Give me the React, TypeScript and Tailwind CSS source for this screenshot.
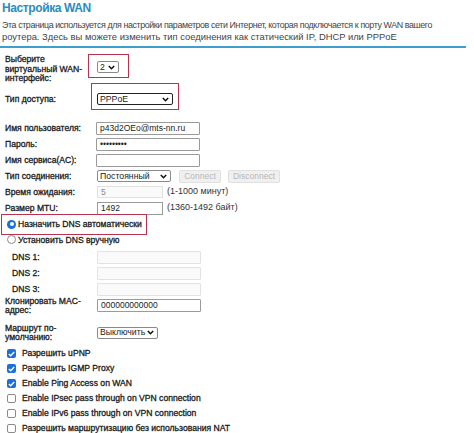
import type { ReactNode } from 'react'

const Chevron = () => (
  <svg width="7" height="5" viewBox="0 0 7 5" className="shrink-0">
    <path d="M0.8 0.9 L3.5 3.7 L6.2 0.9" fill="none" stroke="#111" strokeWidth="1.5" />
  </svg>
)

const Select = ({ value, w, dark }: { value: string; w: string; dark?: boolean }) => (
  <div
    className={`flex h-[12px] items-center justify-between bg-white pl-[2px] pr-[3px] text-[8.7px] text-[#222] [-webkit-text-stroke:0px] ${w} ${
      dark ? 'rounded-[2px] border-[1.5px] border-[#222]' : 'rounded-[2px] border border-[#8a8a8a]'
    }`}
  >
    <span className="leading-none">{value}</span>
    <Chevron />
  </div>
)

const Input = ({ value, disabled }: { value?: string; disabled?: boolean }) => (
  <div
    className={`flex h-[13px] w-[104px] items-center rounded-[1px] px-[3px] text-[8.5px] leading-none [-webkit-text-stroke:0px] ${
      disabled ? 'border border-[#e2e2e2] bg-[#fafafa] text-[#8a8a8a]' : 'border border-[#9a9a9a] bg-white text-[#222]'
    }`}
  >
    {value}
  </div>
)

const Row = ({ label, children, h = 'h-[16px]' }: { label: ReactNode; children?: ReactNode; h?: string }) => (
  <div className={`flex items-center ${h}`}>
    <div className="w-[96px] shrink-0 pl-[5px] leading-[9px]">{label}</div>
    <div className="flex items-center gap-[4px]">{children}</div>
  </div>
)

const RedBox = ({ cls }: { cls: string }) => (
  <div className={`pointer-events-none absolute border-[1.5px] border-[#b9334f] ${cls}`} />
)

const Check = ({ on, label }: { on: boolean; label: string }) => (
  <div className="flex h-[15px] items-center pl-[7px]">
    {on ? (
      <div className="flex h-[9px] w-[9px] items-center justify-center rounded-[2px] bg-[#1a6fd8]">
        <svg width="7" height="6" viewBox="0 0 7 6">
          <path d="M0.8 3 L2.7 4.8 L6.2 1" fill="none" stroke="#fff" strokeWidth="1.4" />
        </svg>
      </div>
    ) : (
      <div className="h-[9px] w-[9px] rounded-[2px] border border-[#8a8a8a] bg-white" />
    )}
    <span className="ml-[6px]">{label}</span>
  </div>
)

const Radio = ({ on, label }: { on: boolean; label: string }) => (
  <div className="flex items-center">
    {on ? (
      <div className="flex h-[9px] w-[9px] items-center justify-center rounded-full bg-[#1a6fd8]">
        <div className="h-[4px] w-[4px] rounded-full bg-white" />
      </div>
    ) : (
      <div className="h-[9px] w-[9px] rounded-full border border-[#8a8a8a] bg-white" />
    )}
    <span className="ml-[2px]">{label}</span>
  </div>
)

export default function App() {
  return (
    <div className="relative h-[433px] w-[474px] overflow-hidden bg-white font-['Liberation_Sans',Arial,sans-serif] text-[8.6px] text-[#1a1a1a] [-webkit-text-stroke:0.3px_#1a1a1a]">
      {/* ========== HEADER ========== */}
      <div className="h-[20px] whitespace-nowrap pl-[2px] pt-[2px] text-[12px] font-bold leading-[13px] tracking-[-0.4px] text-[#2b8cc0] [-webkit-text-stroke:0px]">
        Настройка WAN
      </div>
      <p className="whitespace-nowrap pl-[2px] font-normal leading-[11px] text-[#444] [-webkit-text-stroke:0px]">
        <span className="text-[8.9px] tracking-[-0.4px]">
          Эта страница используется для настройки параметров сети Интернет, которая подключается к порту WAN вашего
        </span>
        <br />
        <span className="text-[9.4px]">роутера. Здесь вы можете изменить тип соединения как статический IP, DHCP или PPPoE</span>
      </p>
      <div className="mt-[3px] h-[2px] w-[466px] bg-[#3d9fcc]" />

      {/* ========== WAN ========== */}
      <div className="mt-[5px] flex h-[30px] items-start">
        <div className="w-[96px] shrink-0 pl-[5px] pt-[2px] leading-[9.5px]">
          Выберите
          <br />
          виртуальный WAN-
          <br />
          интерфейс:
        </div>
        <div className="relative ml-[1px] mt-[8px]">
          <Select value="2" w="w-[22px]" />
          <RedBox cls="-left-[9px] -top-[7px] -right-[10px] -bottom-[5px]" />
        </div>
      </div>

      <div className="mt-[6px] flex h-[20px] items-center">
        <div className="w-[97px] shrink-0 pl-[5px]">Тип доступа:</div>
        <div className="relative">
          <Select value="PPPoE" w="w-[76px]" dark />
          <RedBox cls="-left-[6px] -top-[10px] -right-[6px] -bottom-[5px]" />
        </div>
      </div>

      {/* ========== PPPoE ========== */}
      <div className="mt-[11px]">
        <Row label="Имя пользователя:">
          <Input value="p43d2OEo@mts-nn.ru" />
        </Row>
        <Row label="Пароль:">
          <Input value="•••••••••" />
        </Row>
        <Row label="Имя сервиса(AC):">
          <Input />
        </Row>
        <Row label="Тип соединения:">
          <div className="ml-[1px]">
            <Select value="Постоянный" w="w-[74px]" />
          </div>
          <div className="ml-[4px] flex h-[13px] w-[42px] items-center justify-center rounded-[2px] border border-[#e0e0e0] bg-[#f0f0f0] text-[8.5px] text-[#b8b8b8] [-webkit-text-stroke:0px]">
            Connect
          </div>
          <div className="ml-[3px] flex h-[13px] w-[52px] items-center justify-center rounded-[2px] border border-[#e0e0e0] bg-[#f0f0f0] text-[8.5px] text-[#b8b8b8] [-webkit-text-stroke:0px]">
            Disconnect
          </div>
        </Row>
        <Row label="Время ожидания:">
          <div className="ml-[1px] flex h-[12px] w-[66px] items-center border border-[#e2e2e2] bg-[#fafafa] px-[3px] text-[8.5px] leading-none text-[#888] [-webkit-text-stroke:0px]">
            5
          </div>
          <span className="text-[9px] text-[#333] [-webkit-text-stroke:0px]">(1-1000 минут)</span>
        </Row>
        <Row label="Размер MTU:">
          <div className="ml-[1px] flex h-[13px] w-[66px] items-center border border-[#9a9a9a] bg-white px-[3px] text-[8.5px] leading-none text-[#222] [-webkit-text-stroke:0px]">
            1492
          </div>
          <span className="text-[9px] text-[#333] [-webkit-text-stroke:0px]">(1360-1492 байт)</span>
        </Row>
      </div>

      {/* ========== DNS ========== */}
      <div className="relative ml-[7px] flex h-[17px] items-center">
        <Radio on label="Назначить DNS автоматически" />
        <RedBox cls="-left-[6px] top-[-2px] w-[146px] h-[21px]" />
      </div>
      <div className="ml-[7px] flex h-[14px] items-center">
        <Radio on={false} label="Установить DNS вручную" />
      </div>
      <div className="mt-[2px]">
        {['DNS 1:', 'DNS 2:', 'DNS 3:'].map((d) => (
          <div key={d} className="flex h-[16px] items-center">
            <div className="w-[97px] shrink-0 pl-[12px]">{d}</div>
            <Input disabled />
          </div>
        ))}
      </div>

      <Row
        h="h-[17px]"
        label={
          <>
            Клонировать MAC-
            <br />
            адрес:
          </>
        }
      >
        <div className="ml-[1px]">
          <Input value="000000000000" />
        </div>
      </Row>
      <Row
        h="h-[17px] mt-[10px]"
        label={
          <>
            Маршрут по-
            <br />
            умолчанию:
          </>
        }
      >
        <div className="ml-[1px]">
          <Select value="Выключить" w="w-[61px]" />
        </div>
      </Row>

      {/* ========== OPTIONS ========== */}
      <div className="mt-[5px]">
        <Check on label="Разрешить uPNP" />
        <Check on label="Разрешить IGMP Proxy" />
        <Check on label="Enable Ping Access on WAN" />
        <Check on={false} label="Enable IPsec pass through on VPN connection" />
        <Check on={false} label="Enable IPv6 pass through on VPN connection" />
        <Check on={false} label="Разрешить маршрутизацию без использования NAT" />
      </div>
    </div>
  )
}
